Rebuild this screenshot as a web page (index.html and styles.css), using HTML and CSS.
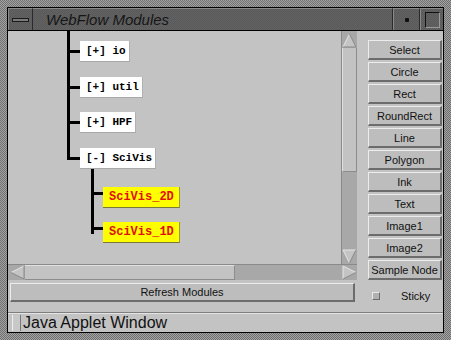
FILE: index.html
```html
<!DOCTYPE html>
<html lang="en">
<head>
    <meta charset="UTF-8">
    <title>WebFlow Modules</title>
    <link rel="stylesheet" href="styles.css">
</head>
<body>
    <div class="frame">
        <div class="window">
            <div class="titlebar">
                <div class="tb-btn menu"><span class="bar"></span></div>
                <div class="title">WebFlow Modules</div>
                <div class="tb-btn mini"><span class="dot"></span></div>
                <div class="tb-btn maxi"><span class="square"></span></div>
            </div>
            <div class="client">
                <div class="main">
                    <div class="left">
                        <div class="view">
                            <div class="tree">
                                <div class="row r1">
                                    <div class="branch"></div>
                                    <div class="node">[+] io</div>
                                </div>
                                <div class="row r2">
                                    <div class="branch"></div>
                                    <div class="node">[+] util</div>
                                </div>
                                <div class="row r3">
                                    <div class="branch"></div>
                                    <div class="node">[+] HPF</div>
                                </div>
                                <div class="row last">
                                    <div class="branch"></div>
                                    <div class="sub">
                                        <div class="node">[-] SciVis</div>
                                        <div class="children">
                                            <div class="row">
                                                <div class="branch"></div>
                                                <div class="node leaf">SciVis_2D</div>
                                            </div>
                                            <div class="row">
                                                <div class="branch"></div>
                                                <div class="node leaf">SciVis_1D</div>
                                            </div>
                                        </div>
                                    </div>
                                </div>
                            </div>
                            <div class="vscroll">
                                <div class="arrow">
                                    <svg width="15" height="15" viewBox="0 0 15 15"><polygon points="7.5,1 14,14 1,14" fill="#c4c4c4"/><polyline points="1,14 7.5,1" stroke="#e6e6e6" fill="none"/><polyline points="7.5,1 14,14 1,14" stroke="#8a8a8a" fill="none"/></svg>
                                </div>
                                <div class="trough">
                                    <div class="thumb"></div>
                                </div>
                                <div class="arrow">
                                    <svg width="15" height="15" viewBox="0 0 15 15"><polygon points="1,1 14,1 7.5,14" fill="#c4c4c4"/><polyline points="7.5,14 1,1 14,1" stroke="#e6e6e6" fill="none"/><polyline points="14,1 7.5,14" stroke="#8a8a8a" fill="none"/></svg>
                                </div>
                            </div>
                        </div>
                        <div class="hscroll">
                            <div class="arrow">
                                <svg width="15" height="15" viewBox="0 0 15 15"><polygon points="1,7.5 14,1 14,14" fill="#c4c4c4"/><polyline points="14,1 1,7.5" stroke="#e6e6e6" fill="none"/><polyline points="1,7.5 14,14 14,1" stroke="#8a8a8a" fill="none"/></svg>
                            </div>
                            <div class="trough">
                                <div class="thumb"></div>
                            </div>
                            <div class="arrow">
                                <svg width="15" height="15" viewBox="0 0 15 15"><polygon points="14,7.5 1,1 1,14" fill="#c4c4c4"/><polyline points="1,14 1,1 14,7.5" stroke="#e6e6e6" fill="none"/><polyline points="14,7.5 1,14" stroke="#8a8a8a" fill="none"/></svg>
                            </div>
                        </div>
                        <button class="btn refresh">Refresh Modules</button>
                    </div>
                    <div class="tools">
                        <button class="btn tool">Select</button>
                        <button class="btn tool">Circle</button>
                        <button class="btn tool">Rect</button>
                        <button class="btn tool">RoundRect</button>
                        <button class="btn tool">Line</button>
                        <button class="btn tool">Polygon</button>
                        <button class="btn tool">Ink</button>
                        <button class="btn tool">Text</button>
                        <button class="btn tool">Image1</button>
                        <button class="btn tool">Image2</button>
                        <button class="btn tool">Sample Node</button>
                        <label class="sticky"><span class="check"></span>Sticky</label>
                    </div>
                </div>
                <div class="status"><span class="grip"></span>Java Applet Window</div>
            </div>
        </div>
    </div>
</body>
</html>
```

FILE: styles.css
```css
body {
    margin: 0;
    padding: 0;
    background: #888;
    font-family: "Liberation Sans", Arial, sans-serif;
}
.frame {
    width: 451px;
    height: 340px;
    padding: 7px;
    box-sizing: border-box;
    background: repeating-conic-gradient(#a2a2a2 0 25%, #707070 0 50%) 0 0 / 2px 2px;
}
.window {
    height: 100%;
    border: 1px solid #000;
    box-sizing: border-box;
    display: flex;
    flex-direction: column;
}

/* title bar */
.titlebar {
    height: 22px;
    display: flex;
    border-bottom: 1px solid #000;
    background: repeating-conic-gradient(#646464 0 25%, #585858 0 50%) 0 0 / 2px 2px;
}
.tb-btn {
    display: flex;
    align-items: center;
    justify-content: center;
    box-sizing: border-box;
    border-top: 1px solid #8a8a8a;
    border-left: 1px solid #8a8a8a;
    border-right: 1px solid #2a2a2a;
}
.menu {
    width: 25px;
}
.bar {
    width: 15px;
    height: 2px;
    border: 1px solid #1c1c1c;
    background: #7a7a7a;
}
.title {
    flex: 1;
    padding-left: 13px;
    font-size: 15px;
    font-style: italic;
    line-height: 22px;
    color: #161616;
    border-top: 1px solid #8a8a8a;
    border-right: 1px solid #2a2a2a;
    box-sizing: border-box;
}
.mini {
    width: 27px;
}
.dot {
    width: 4px;
    height: 4px;
    background: #111;
    border-radius: 1px;
}
.maxi {
    width: 23px;
    border-right: none;
}
.square {
    width: 13px;
    height: 14px;
    border: 1px solid #111;
    border-right-color: #9a9a9a;
    border-bottom-color: #9a9a9a;
}

/* client area */
.client {
    flex: 1;
    display: flex;
    flex-direction: column;
    background: #c3c3c3;
}
.main {
    flex: 1;
    display: flex;
}
.left {
    width: 349px;
    display: flex;
    flex-direction: column;
}
.view {
    height: 233px;
    display: flex;
}

/* tree */
.tree {
    flex: 1;
    padding-left: 59px;
    overflow: hidden;
}
.row {
    display: flex;
    height: 36px;
}
.row.r2 {
    height: 35px;
}
.branch {
    width: 13px;
    flex: none;
    background:
        linear-gradient(#000, #000) 0 0 / 3px 100% no-repeat,
        linear-gradient(#000, #000) 0 19px / 100% 3px no-repeat;
}
.row.last .branch {
    background:
        linear-gradient(#000, #000) 0 0 / 3px 22px no-repeat,
        linear-gradient(#000, #000) 0 19px / 100% 3px no-repeat;
}
.node {
    align-self: flex-start;
    margin-top: 10px;
    height: 20px;
    line-height: 20px;
    padding: 0 3px 0 6px;
    font-family: "Liberation Mono", "Courier New", monospace;
    font-weight: bold;
    font-size: 11px;
    color: #000;
    background: #fff;
    border-bottom: 1px solid #a8a8a8;
    border-right: 1px solid #b0b0b0;
    white-space: pre;
}
.sub {
    display: flex;
    flex-direction: column;
    align-items: flex-start;
}
.children {
    margin-left: 11px;
    padding-top: 4px;
    background: linear-gradient(#000, #000) 0 0 / 3px 65px no-repeat;
}
.children .row {
    height: 35px;
}
.children .branch {
    width: 12px;
    background: linear-gradient(#000, #000) 0 23px / 100% 3px no-repeat;
}
.node.leaf {
    margin-top: 14px;
    font-size: 12px;
    padding: 0 5px 0 6px;
    color: #e01010;
    background: #ffff00;
    border-bottom: 1px solid #7a7a38;
    border-right: 1px solid #9a9a40;
}

/* scrollbars */
.vscroll {
    width: 16px;
    display: flex;
    flex-direction: column;
    background: #a8a8a8;
    border-left: 1px solid #8a8a8a;
    box-sizing: border-box;
    padding-top: 2px;
}
.arrow {
    width: 15px;
    height: 15px;
    flex: none;
    display: flex;
}
.vscroll .trough {
    flex: 1;
}
.vscroll .thumb {
    height: 124px;
    background: #c3c3c3;
    border-right: 1px solid #8c8c8c;
    border-bottom: 1px solid #8c8c8c;
    border-left: 1px solid #e0e0e0;
    box-sizing: border-box;
}
.hscroll {
    height: 16px;
    display: flex;
    padding-left: 2px;
    background: #a8a8a8;
    border-top: 1px solid #8a8a8a;
    box-sizing: border-box;
}
.hscroll .trough {
    flex: 1;
}
.hscroll .thumb {
    width: 210px;
    height: 100%;
    background: #c3c3c3;
    border-top: 1px solid #e0e0e0;
    border-bottom: 1px solid #8c8c8c;
    border-right: 1px solid #8c8c8c;
    box-sizing: border-box;
}

/* buttons */
.btn {
    display: block;
    margin: 0;
    padding: 0;
    font-family: "Liberation Sans", Arial, sans-serif;
    font-size: 11px;
    color: #111;
    background: #bdbdbd;
    border-style: solid;
    border-width: 1px 2px 2px 1px;
    border-color: #ececec #6c6c6c #6c6c6c #ececec;
    box-sizing: border-box;
}
.refresh {
    width: 345px;
    height: 19px;
    margin: 3px 0 0 2px;
}
.tools {
    flex: 1;
    display: flex;
    flex-direction: column;
    gap: 2px;
    padding: 9px 1px 0 11px;
}
.tool {
    width: 74px;
    height: 20px;
}
.sticky {
    display: flex;
    align-items: center;
    margin-top: 8px;
    padding-left: 4px;
    font-size: 11px;
    color: #111;
}
.check {
    width: 8px;
    height: 8px;
    margin-right: 21px;
    background: #b0b0b0;
    border-top: 1px solid #e8e8e8;
    border-left: 1px solid #e8e8e8;
    border-right: 1px solid #6c6c6c;
    border-bottom: 1px solid #6c6c6c;
    box-sizing: border-box;
}

/* status line */
.status {
    height: 19px;
    display: flex;
    align-items: center;
    border-top: 1px solid #7e7e7e;
    box-shadow: inset 0 1px 0 #e4e4e4;
    font-size: 16px;
    color: #111;
}
.grip {
    width: 7px;
    height: 16px;
    margin: 1px 2px 0 4px;
    background: #c8c8c8;
    border-left: 1px solid #eeeeee;
    border-right: 1px solid #7a7a7a;
}
```
